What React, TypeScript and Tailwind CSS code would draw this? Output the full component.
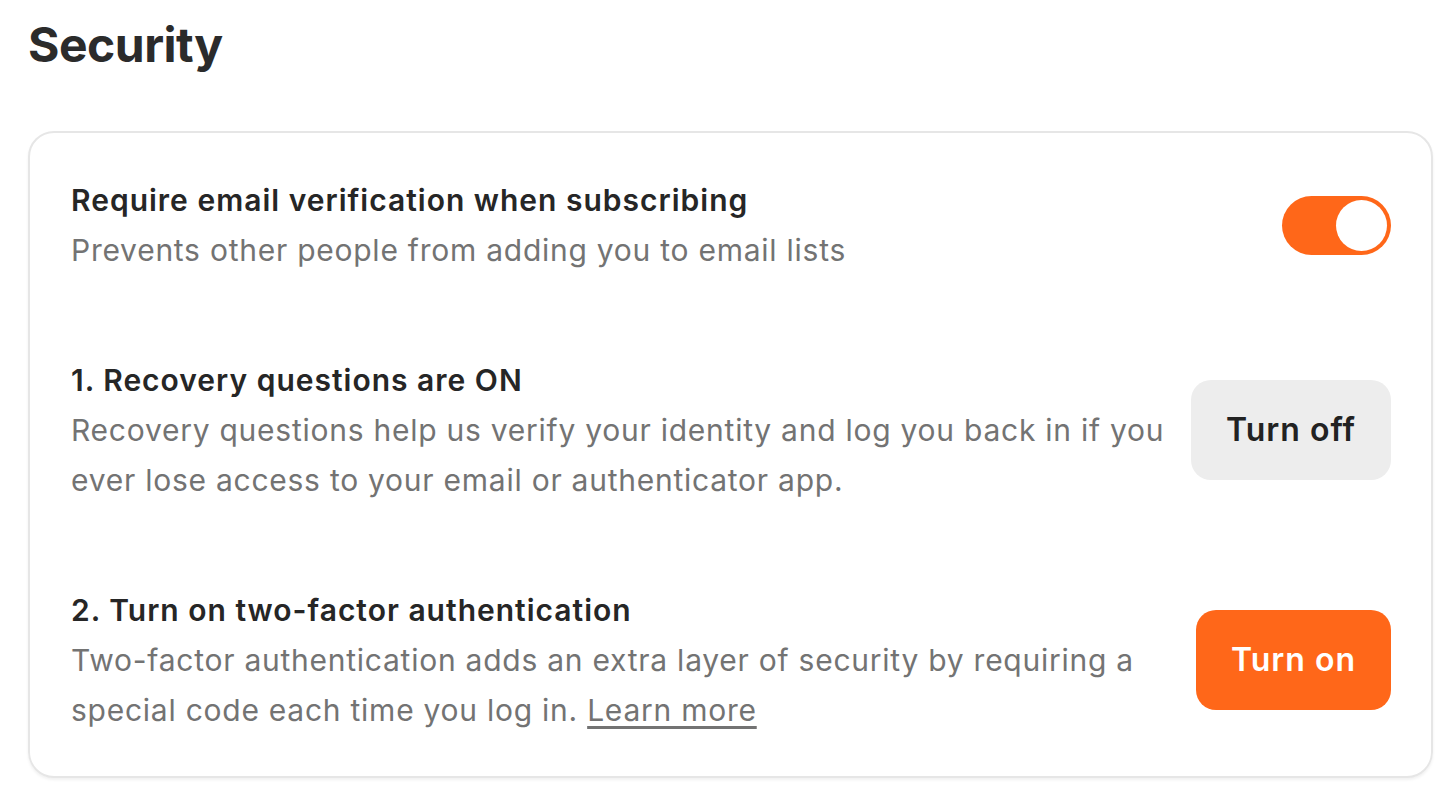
import { useState } from "react";

const font = { fontFamily: "Inter, 'Noto Sans', sans-serif" };

function Toggle({ on, onChange }: { on: boolean; onChange: () => void }) {
  return (
    <button
      onClick={onChange}
      className={`flex h-[59px] w-[109px] shrink-0 items-center rounded-full p-[4px] ${
        on ? "justify-end bg-[#ff6719]" : "justify-start bg-[#d9d9d9]"
      }`}
    >
      <span className="block h-[51px] w-[51px] rounded-full bg-white" />
    </button>
  );
}

function Row({
  title,
  lines,
  action,
}: {
  title: string;
  lines: React.ReactNode[];
  action: React.ReactNode;
}) {
  return (
    <div className="flex items-center gap-[20px]">
      <div className="min-w-0 flex-1 text-[30px] leading-[50px]">
        <div className="font-semibold tracking-[1px] text-[#262626]">{title}</div>
        {lines.map((line, i) => (
          <div key={i} className="whitespace-nowrap tracking-[0.75px] text-[#737373]">
            {line}
          </div>
        ))}
      </div>
      {action}
    </div>
  );
}

export default function App() {
  const [verify, setVerify] = useState(true);

  return (
    <div className="min-h-screen bg-white pl-[28px] pr-[23px] pt-[14px]" style={font}>
      <h1 className="text-[48px] font-bold leading-[62px] tracking-[-0.5px] text-[#2b2b2b]">
        Security
      </h1>

      <div className="mt-[55px] flex flex-col gap-[80px] rounded-[26px] border-2 border-[#e6e6e6] pb-[41px] pl-[41px] pr-[40px] pt-[42px] shadow-[0_2px_3px_rgba(0,0,0,0.06)]">
        <Row
          title="Require email verification when subscribing"
          lines={["Prevents other people from adding you to email lists"]}
          action={<Toggle on={verify} onChange={() => setVerify((v) => !v)} />}
        />

        <Row
          title="1. Recovery questions are ON"
          lines={[
            "Recovery questions help us verify your identity and log you back in if you",
            "ever lose access to your email or authenticator app.",
          ]}
          action={
            <button className="h-[100px] w-[200px] shrink-0 rounded-[20px] bg-[#ededed] text-[32px] font-semibold tracking-[1px] text-[#222]">
              Turn off
            </button>
          }
        />

        <Row
          title="2. Turn on two-factor authentication"
          lines={[
            "Two-factor authentication adds an extra layer of security by requiring a",
            <>
              special code each time you log in.{" "}
              <a href="#" className="underline underline-offset-[5px]">
                Learn more
              </a>
            </>,
          ]}
          action={
            <button className="h-[100px] w-[195px] shrink-0 rounded-[20px] bg-[#ff6719] text-[32px] font-semibold tracking-[1px] text-white">
              Turn on
            </button>
          }
        />
      </div>
    </div>
  );
}
